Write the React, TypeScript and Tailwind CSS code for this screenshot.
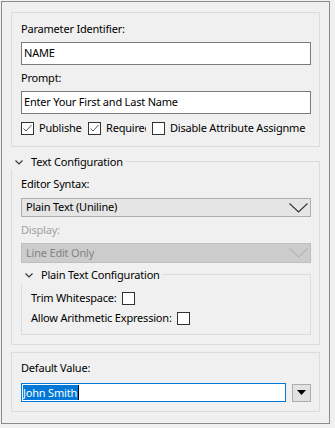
import React from 'react';

const FONT = { fontFamily: '"Noto Sans", "Open Sans", sans-serif' };

function Chevron() {
    return (
        <svg width="8" height="5" viewBox="0 0 8 5" className="shrink-0">
            <polyline points="0.5,0.5 4,4 7.5,0.5" fill="none" stroke="#333" strokeWidth="1.1" />
        </svg>
    );
}

function ComboArrow({ disabled }: { disabled?: boolean }) {
    return (
        <svg width="19" height="10" viewBox="0 0 19 10" className="shrink-0">
            <polyline
                points="0.5,0.5 9.5,9 18.5,0.5"
                fill="none"
                stroke={disabled ? '#b5b5b5' : '#333'}
                strokeWidth="1.1"
            />
        </svg>
    );
}

function CheckBox({ checked }: { checked?: boolean }) {
    return (
        <div className="w-[13px] h-[13px] shrink-0 border border-[#333] bg-white flex items-center justify-center">
            {checked && (
                <svg width="11" height="11" viewBox="0 0 11 11">
                    <polyline points="1.5,5.5 4,8 9.5,2" fill="none" stroke="#555" strokeWidth="1" />
                </svg>
            )}
        </div>
    );
}

function Label({ children, disabled }: { children: React.ReactNode; disabled?: boolean }) {
    return (
        <div className={`h-[16px] leading-[16px] whitespace-nowrap ${disabled ? 'text-[#a0a0a0]' : 'text-black'}`}>
            {children}
        </div>
    );
}

function TextInput({ value }: { value: string }) {
    return (
        <div className="h-[23px] border border-[#7a7a7a] bg-white flex items-center px-[2px] text-black">
            {value}
        </div>
    );
}

function GroupHeader({ title }: { title: string }) {
    return (
        <div className="-mt-[8px] -ml-[10px] w-fit h-[16px] bg-[#f0f0f0] flex items-center pl-[4px] pr-[2px] gap-[8px] text-black whitespace-nowrap">
            <Chevron />
            <span className="leading-[16px]">{title}</span>
        </div>
    );
}

export default function App() {
    return (
        <div
            className="w-[335px] h-[428px] bg-[#f0f0f0] pt-[1px] pl-[1px] text-[11px] tracking-[-0.2px]"
            style={FONT}
        >
            <div className="w-[329px] h-[423px] border border-[#8c8c8c] px-[9px] pt-[10px]">
                {/* General */}
                <div className="border border-[#dcdcdc] pl-[9px] pr-[8px] pt-[8px] pb-[11px]">
                    <Label>Parameter Identifier:</Label>
                    <div className="mt-[5px]">
                        <TextInput value="NAME" />
                    </div>
                    <div className="mt-[5px]">
                        <Label>Prompt:</Label>
                    </div>
                    <div className="mt-[5px]">
                        <TextInput value="Enter Your First and Last Name" />
                    </div>
                    <div className="mt-[8px] flex items-center h-[13px] text-black">
                        <CheckBox checked />
                        <span className="ml-[5px] w-[43px] overflow-hidden whitespace-nowrap">Published</span>
                        <div className="ml-[6px]"><CheckBox checked /></div>
                        <span className="ml-[5px] w-[40px] overflow-hidden whitespace-nowrap">Required</span>
                        <div className="ml-[6px]"><CheckBox /></div>
                        <span className="ml-[5px] w-[136px] overflow-hidden whitespace-nowrap">Disable Attribute Assignment</span>
                    </div>
                </div>

                {/* Text Configuration */}
                <div className="mt-[14px] border border-[#dcdcdc] pl-[9px] pr-[8px] pb-[9px]">
                    <GroupHeader title="Text Configuration" />
                    <div className="mt-[6px]">
                        <Label>Editor Syntax:</Label>
                    </div>
                    <div className="mt-[6px] h-[19px] border border-[#adadad] bg-[#e5e5e5] flex items-center justify-between pl-[4px] pr-[2px] text-black">
                        <span>Plain Text (Uniline)</span>
                        <ComboArrow />
                    </div>
                    <div className="mt-[5px]">
                        <Label disabled>Display:</Label>
                    </div>
                    <div className="mt-[5px] h-[20px] border border-[#bfbfbf] bg-[#cccccc] flex items-center justify-between pl-[4px] pr-[2px] text-[#838383]">
                        <span>Line Edit Only</span>
                        <ComboArrow disabled />
                    </div>

                    {/* Plain Text Configuration */}
                    <div className="mt-[11px] border border-[#dcdcdc] pl-[9px] pr-[8px] pb-[9px]">
                        <GroupHeader title="Plain Text Configuration" />
                        <div className="mt-[9px] flex items-center h-[13px] gap-[5px] text-black">
                            <span>Trim Whitespace:</span>
                            <CheckBox />
                        </div>
                        <div className="mt-[7px] flex items-center h-[13px] gap-[5px] text-black">
                            <span>Allow Arithmetic Expression:</span>
                            <CheckBox />
                        </div>
                    </div>
                </div>

                {/* Default Value */}
                <div className="mt-[7px] border border-[#dcdcdc] pl-[9px] pr-[8px] pt-[7px] pb-[9px]">
                    <Label>Default Value:</Label>
                    <div className="mt-[7px] flex items-center gap-[6px]">
                        <div className="flex-1 h-[19px] border border-[#0078d7] bg-white flex items-center pl-[1px]">
                            <span className="bg-[#0078d7] text-white leading-[15px] pr-[1px]">John Smith</span>
                            <span className="w-[1px] h-[15px] bg-black" />
                        </div>
                        <div className="w-[19px] h-[18px] border border-[#adadad] bg-[#e1e1e1] flex items-center justify-center">
                            <svg width="9" height="5" viewBox="0 0 9 5">
                                <polygon points="0,0 9,0 4.5,5" fill="#000" />
                            </svg>
                        </div>
                    </div>
                </div>
            </div>
        </div>
    );
}
